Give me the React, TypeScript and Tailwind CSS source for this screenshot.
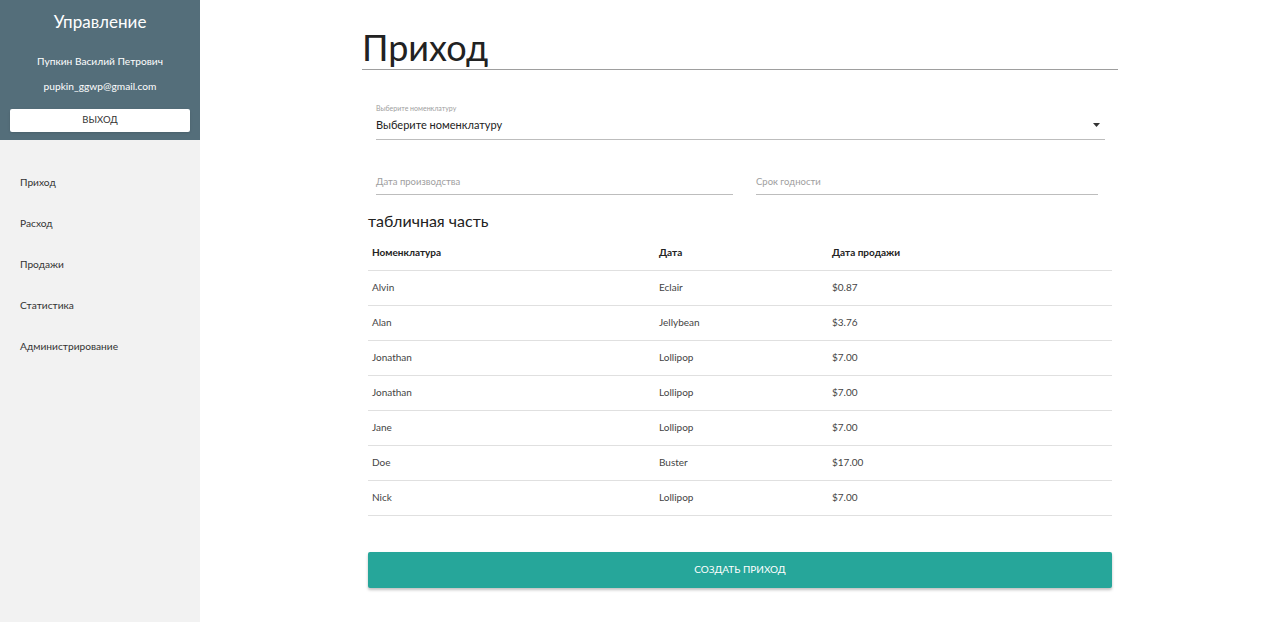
import React from 'react';

const rows = [
  { name: 'Alvin', date: 'Eclair', price: '$0.87' },
  { name: 'Alan', date: 'Jellybean', price: '$3.76' },
  { name: 'Jonathan', date: 'Lollipop', price: '$7.00' },
  { name: 'Jonathan', date: 'Lollipop', price: '$7.00' },
  { name: 'Jane', date: 'Lollipop', price: '$7.00' },
  { name: 'Doe', date: 'Buster', price: '$17.00' },
  { name: 'Nick', date: 'Lollipop', price: '$7.00' },
];

const navItems = ['Приход', 'Расход', 'Продажи', 'Статистика', 'Администрирование'];

function Sidebar() {
  return (
    <aside className="w-[200px] shrink-0 bg-[#f2f2f2] min-h-[622px]">
      <div className="bg-[#546e7a] h-[140px] flex flex-col items-center pt-[10px] text-white">
        <div className="text-[17px] leading-[24px]">Управление</div>
        <div className="text-[10.2px] leading-[14px] mt-[20px]">Пупкин Василий Петрович</div>
        <div className="text-[10.2px] leading-[14px] mt-[11px]">pupkin_ggwp@gmail.com</div>
        <button className="mt-[16px] w-[180px] h-[23px] bg-white text-[#333] text-[9.5px] uppercase rounded-[2px] shadow-sm">
          Выход
        </button>
      </div>
      <nav className="flex flex-col pt-[35px]">
        {navItems.map((item) => (
          <a key={item} className="block px-[20px] h-[41px] text-[10.2px] text-[#333] leading-[14px] cursor-pointer">
            {item}
          </a>
        ))}
      </nav>
    </aside>
  );
}

function Field({ label, className }: { label: string; className: string }) {
  return (
    <div className={'border-b border-[#bdbdbd] pb-[5px] ' + className}>
      <div className="text-[9.5px] text-[#9e9e9e] leading-[14px]">{label}</div>
    </div>
  );
}

export default function App() {
  return (
    <div className="flex w-full min-h-[622px] bg-white font-['Lato','Open_Sans',sans-serif]">
      <Sidebar />
      <main className="flex-1 flex justify-center">
        <div className="w-[756px] pt-[26px]">
          <h1 className="text-[36px] font-normal text-[#222] leading-[42px] border-b border-[#9e9e9e] pb-[1px]">
            Приход
          </h1>

          <div className="mx-[14px] mt-[33px] w-[729px] border-b border-[#bdbdbd] pb-[6px]">
            <div className="text-[7px] text-[#9e9e9e] leading-[10px]">Выберите номенклатуру</div>
            <div className="flex items-center justify-between mt-[4px]">
              <span className="text-[11px] text-[#222] leading-[16px]">Выберите номенклатуру</span>
              <svg width="7" height="4" viewBox="0 0 7 4" className="mr-[5px]">
                <path d="M0 0h7L3.5 4z" fill="#333" />
              </svg>
            </div>
          </div>

          <div className="flex mx-[14px] mt-[35px] gap-[23px]">
            <Field label="Дата производства" className="w-[357px]" />
            <Field label="Срок годности" className="w-[342px]" />
          </div>

          <div className="mx-[6px] mt-[15px]">
            <div className="text-[16px] text-[#222] leading-[22px]">табличная часть</div>
            <table className="w-[744px] mt-[4px] text-[10px] text-left border-collapse">
              <thead>
                <tr className="border-b border-[#e0e0e0] h-[34px]">
                  <th className="pl-[4px] w-[291px] font-bold text-[#222]">Номенклатура</th>
                  <th className="w-[173px] font-bold text-[#222]">Дата</th>
                  <th className="font-bold text-[#222]">Дата продажи</th>
                </tr>
              </thead>
              <tbody>
                {rows.map((r, i) => (
                  <tr key={i} className="border-b border-[#e0e0e0] h-[35px] text-[#444]">
                    <td className="pl-[4px]">{r.name}</td>
                    <td>{r.date}</td>
                    <td>{r.price}</td>
                  </tr>
                ))}
              </tbody>
            </table>
            <button className="mt-[36px] w-[744px] h-[36px] bg-[#26a69a] text-white text-[10px] uppercase rounded-[2px] shadow-[0_2px_3px_rgba(0,0,0,0.25)]">
              Создать приход
            </button>
          </div>
        </div>
      </main>
    </div>
  );
}
